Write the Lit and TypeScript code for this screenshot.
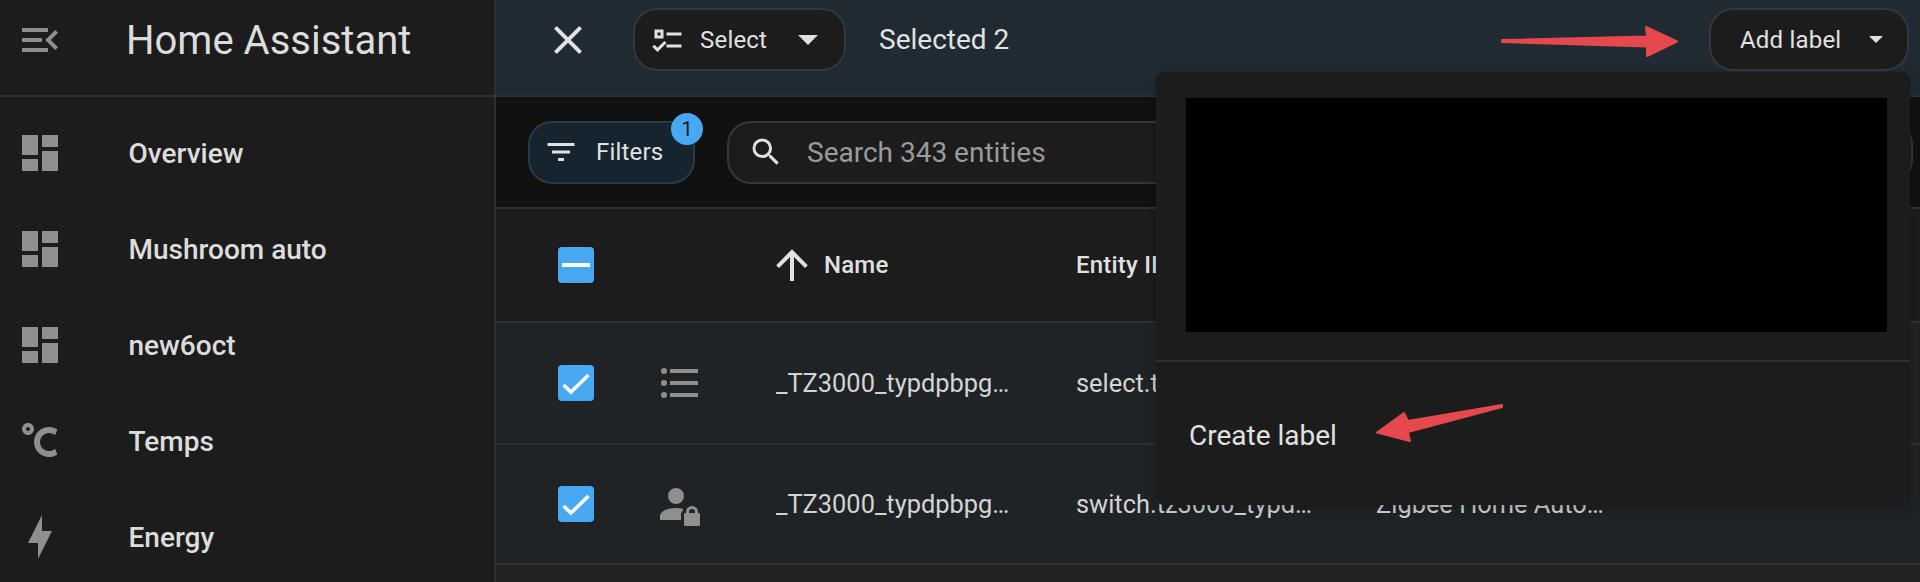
import { LitElement, css, html, svg } from 'lit'
import { customElement } from 'lit/decorators.js'

const dash = 'M13,3V9H21V3M13,21H21V11H13M3,21H11V15H3M3,13H11V3H3V13Z'
const celsius = 'M16.5,5C18.05,5 19.5,5.47 20.69,6.28L19.53,9.17C18.73,8.44 17.67,8 16.5,8C14,8 12,10 12,12.5C12,15 14,17 16.5,17C17.67,17 18.73,16.56 19.53,15.83L20.69,18.72C19.5,19.53 18.05,20 16.5,20C12.36,20 9,16.64 9,12.5C9,8.36 12.36,5 16.5,5M6,3C7.66,3 9,4.34 9,6C9,7.66 7.66,9 6,9C4.34,9 3,7.66 3,6C3,4.34 4.34,3 6,3M6,5C5.45,5 5,5.45 5,6C5,6.55 5.45,7 6,7C6.55,7 7,6.55 7,6C7,5.45 6.55,5 6,5Z'
const bolt = 'M11 15H6L13 1V9H18L11 23V15Z'
const menuOpen = 'M21,15.61L19.59,17L14.58,12L19.59,7L21,8.39L17.44,12L21,15.61M3,6H16V8H3V6M3,13V11H13V13H3M3,18V16H16V18H3Z'
const close = 'M19,6.41L17.59,5L12,10.59L6.41,5L5,6.41L10.59,12L5,17.59L6.41,19L12,13.41L17.59,19L19,17.59L13.41,12L19,6.41Z'
const listChecks = 'M3,5H9V11H3V5M5,7V9H7V7H5M11,7H21V9H11V7M11,15H21V17H11V15M5,20L1.5,16.5L2.91,15.09L5,17.17L9.59,12.59L11,14L5,20Z'
const filter = 'M6,13H18V11H6M3,6V8H21V6M10,18H14V16H10V18Z'
const magnify = 'M9.5,3A6.5,6.5 0 0,1 16,9.5C16,11.11 15.41,12.59 14.44,13.73L14.71,14H15.5L20.5,19L19,20.5L14,15.5V14.71L13.73,14.44C12.59,15.41 11.11,16 9.5,16A6.5,6.5 0 0,1 3,9.5A6.5,6.5 0 0,1 9.5,3M9.5,5C7,5 5,7 5,9.5C5,12 7,14 9.5,14C12,14 14,12 14,9.5C14,7 12,5 9.5,5Z'
const arrowUp = 'M13,20H11V8L5.5,13.5L4.08,12.08L12,4.16L19.92,12.08L18.5,13.5L13,8V20Z'
const listBulleted = 'M7,5H21V7H7V5M7,13V11H21V13H7M4,4.5A1.5,1.5 0 0,1 5.5,6A1.5,1.5 0 0,1 4,7.5A1.5,1.5 0 0,1 2.5,6A1.5,1.5 0 0,1 4,4.5M4,10.5A1.5,1.5 0 0,1 5.5,12A1.5,1.5 0 0,1 4,13.5A1.5,1.5 0 0,1 2.5,12A1.5,1.5 0 0,1 4,10.5M7,19V17H21V19H7M4,16.5A1.5,1.5 0 0,1 5.5,18A1.5,1.5 0 0,1 4,19.5A1.5,1.5 0 0,1 2.5,18A1.5,1.5 0 0,1 4,16.5Z'
const accountLock = 'M10 4A4 4 0 0 0 6 8A4 4 0 0 0 10 12A4 4 0 0 0 14 8A4 4 0 0 0 10 4ZM10 14C5.58 14 2 15.79 2 18V20H12.5V17.2C12.5 16.3 12.9 15.6 13.5 15.2V14.4C12.4 14.15 11.2 14 10 14ZM18 13A3 3 0 0 0 15 16V16.5H14.7A.7.7 0 0 0 14 17.2V22.3A.7.7 0 0 0 14.7 23H21.3A.7.7 0 0 0 22 22.3V17.2A.7.7 0 0 0 21.3 16.5H21V16A3 3 0 0 0 18 13ZM18 14.5A1.5 1.5 0 0 1 19.5 16V16.5H16.5V16A1.5 1.5 0 0 1 18 14.5Z'

const icon = (d: string, size = 48) => html`<svg class="icon" width=${size} height=${size} viewBox="0 0 24 24"><path fill="currentColor" fill-rule="evenodd" d=${d}></path></svg>`

const navItems = [
  { label: 'Overview', icon: dash },
  { label: 'Mushroom auto', icon: dash },
  { label: 'new6oct', icon: dash },
  { label: 'Temps', icon: celsius },
  { label: 'Energy', icon: bolt },
]

const rows = [
  { icon: listBulleted, name: '_TZ3000_typdpbpg_switch_type', entity: 'select.tz3000_typdpbpg_type', integration: 'Zigbee Home Automation' },
  { icon: accountLock, name: '_TZ3000_typdpbpg_child_lock', entity: 'switch.tz3000_typdpbpg_child_lock', integration: 'Zigbee Home Automation' },
]

@customElement('app-root')
export class AppRoot extends LitElement {
  static styles = css`
    :host {
      display: flex;
      position: relative;
      width: 1920px;
      height: 582px;
      overflow: hidden;
      background: #232323;
      color: #e1e1e1;
      font-family: Roboto, "Liberation Sans", sans-serif;
    }
    .icon { display: block; flex: none; }

    .sidebar {
      flex: none;
      width: 494px;
      background: #1c1c1c;
      border-right: 2px solid #2f2f2f;
    }
    .brand {
      display: flex;
      align-items: center;
      height: 80px;
      padding: 0 0 15px 16px;
      border-bottom: 2px solid #2f2f2f;
      box-sizing: content-box;
    }
    .brand .icon, .nav-item .icon { color: #8f8f8f; }
    .brand-title {
      margin-left: 62px;
      font-size: 40px;
      font-weight: 400;
      color: #dcdcdc;
    }
    .nav { padding-top: 8px; }
    .nav-item {
      display: flex;
      align-items: center;
      height: 96px;
      padding-left: 16px;
    }
    .nav-label {
      margin-left: 64.500px;
      font-size: 28px;
      font-weight: 500;
      color: #dcdcdc;
    }

    .main {
      flex: 1;
      min-width: 0;
      display: flex;
      flex-direction: column;
    }
    .topbar {
      display: flex;
      align-items: center;
      height: 63px;
      flex: none;
      background: #1f2a33;
      border-bottom: 2px solid #2f2f2f;
      padding: 8px 11px 24px 48px;
      box-sizing: content-box;
    }
    .pill {
      display: flex;
      align-items: center;
      height: 63px;
      box-sizing: border-box;
      border: 2px solid #33383c;
      border-radius: 24px;
      background: #1c1c1c;
      font-size: 24px;
      letter-spacing: 0.2px;
    }
    .select { width: 213px; margin-left: 41px; padding-left: 15px; }
    .select .label { margin-left: 14px; }
    .select .caret { margin-left: 31px; }
    .selected { margin-left: 33px; font-size: 28px; }
    .spacer { flex: 1; }
    .add-label { width: 200px; padding-left: 29px; }
    .add-label .caret { margin-left: 28px; }

    .toolbar {
      display: flex;
      align-items: center;
      flex: none;
      height: 110px;
      padding: 0 7px 0 32px;
      background: #111111;
      border-bottom: 2px solid #2f2f2f;
      box-sizing: content-box;
    }
    .filters {
      position: relative;
      flex: none;
      width: 167px;
      padding-left: 13px;
      background: #15242f;
      border-color: #2a3a46;
    }
    .filters .label { margin-left: 17px; }
    .badge {
      position: absolute;
      right: -10px;
      top: -10px;
      width: 32px;
      height: 32px;
      border-radius: 50%;
      background: #48a8f2;
      color: #1c1c1c;
      font-size: 20px;
      line-height: 32px;
      text-align: center;
      letter-spacing: 0;
    }
    .search {
      flex: 1;
      margin-left: 32px;
      padding-left: 19px;
      color: #e1e1e1;
      letter-spacing: 0;
    }
    .placeholder {
      margin-left: 23px;
      font-size: 28px;
      color: #9a9a9a;
    }

    .row {
      display: grid;
      grid-template-columns: 160px 120px 300px 300px 1fr;
      align-items: center;
      flex: none;
      border-bottom: 2px solid #2f2f2f;
      box-sizing: content-box;
    }
    .head { height: 112px; background: #1c1c1c; font-size: 24px; font-weight: 500; letter-spacing: 0.2px; }
    .body { height: 120px; background: #1f2326; font-size: 25.400px; }
    .body.last { height: 118px; }
    .check-cell { padding-left: 62px; }
    .check {
      display: block;
      width: 36px;
      height: 36px;
      border-radius: 4px;
      background: #48a8f2;
    }
    .type { color: #8f8f8f; }
    .sort { display: flex; align-items: center; gap: 8px; margin-left: -8px; color: #e1e1e1; }
    .clip {
      overflow: hidden;
      white-space: nowrap;
      text-overflow: ellipsis;
    }
    .name { max-width: 236px; color: #d4d4d4; }
    .entity { max-width: 240px; color: #d4d4d4; }
    .integration { max-width: 235px; color: #d4d4d4; }

    .menu {
      position: absolute;
      left: 1156px;
      top: 72px;
      width: 754px;
      height: 433px;
      border-radius: 8px;
      background: #1c1c1c;
      box-shadow: 0 4px 10px rgba(0, 0, 0, 0.25);
    }
    .menu-list {
      height: 234px;
      margin: 26px 23px 0 30px;
      background: #000000;
    }
    .menu-sep {
      height: 2px;
      margin-top: 28px;
      background: #2f2f2f;
    }
    .menu-item {
      display: flex;
      align-items: center;
      height: 146px;
      padding-left: 33px;
      font-size: 28px;
    }
    .marks {
      position: absolute;
      left: 0;
      top: 0;
      pointer-events: none;
    }
  `

  private caret(w: number, h: number) {
    return html`<svg class="caret" width=${w} height=${h} viewBox="0 0 20 10" preserveAspectRatio="none"><path fill="#e1e1e1" d="M0 0H20L10 10Z"></path></svg>`
  }

  private checkbox(checked: boolean) {
    return html`<svg class="check" viewBox="0 0 36 36">
      ${checked
        ? svg`<polyline points="5.5,20 13,27 30.5,10" fill="none" stroke="#fff" stroke-width="3.5"></polyline>`
        : svg`<rect x="4" y="16" width="28" height="4" fill="#fff"></rect>`}
    </svg>`
  }

  render() {
    return html`
      <aside class="sidebar">
        <div class="brand">
          ${icon(menuOpen)}
          <div class="brand-title">Home Assistant</div>
        </div>
        <nav class="nav">
          ${navItems.map(item => html`
            <div class="nav-item">${icon(item.icon)}<span class="nav-label">${item.label}</span></div>
          `)}
        </nav>
      </aside>

      <div class="main">
        <header class="topbar">
          ${icon(close)}
          <div class="pill select">
            ${icon(listChecks, 36)}
            <span class="label">Select</span>
            ${this.caret(20, 10)}
          </div>
          <span class="selected">Selected 2</span>
          <div class="spacer"></div>
          <div class="pill add-label">
            <span class="label">Add label</span>
            ${this.caret(14, 7)}
          </div>
        </header>

        <div class="toolbar">
          <div class="pill filters">
            ${icon(filter, 36)}
            <span class="label">Filters</span>
            <span class="badge">1</span>
          </div>
          <div class="pill search">
            ${icon(magnify, 36)}
            <span class="placeholder">Search 343 entities</span>
          </div>
        </div>

        <div class="row head">
          <div class="check-cell">${this.checkbox(false)}</div>
          <div></div>
          <div class="sort">${icon(arrowUp)}<span>Name</span></div>
          <div>Entity ID</div>
          <div>Integration</div>
        </div>
        ${rows.map((row, i) => html`
          <div class="row body ${i === rows.length - 1 ? 'last' : ''}">
            <div class="check-cell">${this.checkbox(true)}</div>
            <div class="type">${icon(row.icon)}</div>
            <div class="clip name">${row.name}</div>
            <div class="clip entity">${row.entity}</div>
            <div class="clip integration">${row.integration}</div>
          </div>
        `)}
      </div>

      <div class="menu">
        <div class="menu-list"></div>
        <div class="menu-sep"></div>
        <div class="menu-item">Create label</div>
      </div>

      <svg class="marks" width="1920" height="582" viewBox="0 0 1920 582">
        <path fill="#e5484d" stroke="#e5484d" stroke-width="2" stroke-linejoin="round"
          d="M1502 40L1647 36.500L1646 27L1677 41.500L1647 56L1647 46.500L1502 42Z"></path>
        <path fill="#e5484d" stroke="#e5484d" stroke-width="2" stroke-linejoin="round"
          d="M1502 405L1408 421L1404 413L1377 432.500L1410 441L1408 432L1502 407Z"></path>
      </svg>
    `
  }
}
